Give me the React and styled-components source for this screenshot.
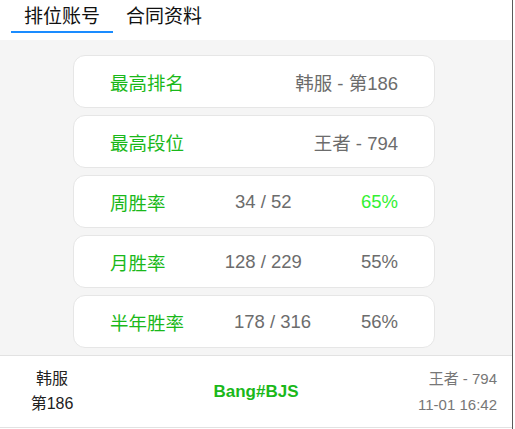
import React from "react";
import styled, { createGlobalStyle } from "styled-components";

const Global = createGlobalStyle`
  html, body { margin: 0; padding: 0; background: #fff; }
  body { font-family: "Liberation Sans", "Noto Sans CJK SC", Arial, sans-serif; }
  * { box-sizing: border-box; }
`;

const Page = styled.div`
  width: 513px;
  height: 429px;
  border-right: 1px solid #5a5a5a;
  display: flex;
  flex-direction: column;
  background: #fff;
  overflow: hidden;
`;

const TabBar = styled.div`
  height: 40px;
  display: flex;
  align-items: flex-start;
  padding-left: 11px;
  background: #fff;
`;

const Tab = styled.div`
  height: 33px;
  padding: 6px 13px 0;
  font-size: 19px;
  line-height: 22px;
  color: #111;
  border-bottom: 2px solid ${(p) => (p.$active ? "#1a8cff" : "transparent")};
`;

const List = styled.div`
  background: #f5f5f5;
  padding: 15px 77px 7px 73px;
  display: flex;
  flex-direction: column;
  gap: 7px;
`;

const Card = styled.div`
  height: 53px;
  background: #fff;
  border: 1px solid #e6e6e6;
  border-radius: 12px;
  padding: 0 36px;
  display: flex;
  align-items: center;
  justify-content: space-between;
  font-size: 18.5px;
`;

const Label = styled.span`
  color: #1ab81a;
`;

const Value = styled.span`
  color: ${(p) => (p.$hi ? "#33f033" : "#6c6c6c")};
`;

const Footer = styled.div`
  height: 73px;
  border-top: 1px solid #e2e2e2;
  border-bottom: 1px solid #e2e2e2;
  display: grid;
  grid-template-columns: 104px 1fr 104px;
  align-items: center;
`;

const Server = styled.div`
  text-align: center;
  font-size: 16px;
  line-height: 25px;
  color: #222;
  padding-bottom: 1px;
`;

const Name = styled.div`
  text-align: center;
  font-size: 17px;
  font-weight: bold;
  color: #1ab81a;
`;

const Meta = styled.div`
  text-align: right;
  padding-right: 15px;
  font-size: 15px;
  line-height: 26px;
  color: #777;
  white-space: nowrap;
`;

const rates = [
  { label: "周胜率", count: "34 / 52", pct: "65%", hi: true },
  { label: "月胜率", count: "128 / 229", pct: "55%" },
  { label: "半年胜率", count: "178 / 316", pct: "56%" },
];

export default function App() {
  return (
    <Page>
      <Global />
      <TabBar>
        <Tab $active>排位账号</Tab>
        <Tab>合同资料</Tab>
      </TabBar>
      <List>
        <Card>
          <Label>最高排名</Label>
          <Value>韩服 - 第186</Value>
        </Card>
        <Card>
          <Label>最高段位</Label>
          <Value>王者 - 794</Value>
        </Card>
        {rates.map((r) => (
          <Card key={r.label}>
            <Label>{r.label}</Label>
            <Value>{r.count}</Value>
            <Value $hi={r.hi}>{r.pct}</Value>
          </Card>
        ))}
      </List>
      <Footer>
        <Server>
          韩服
          <br />
          第186
        </Server>
        <Name>Bang#BJS</Name>
        <Meta>
          王者 - 794
          <br />
          11-01 16:42
        </Meta>
      </Footer>
    </Page>
  );
}
